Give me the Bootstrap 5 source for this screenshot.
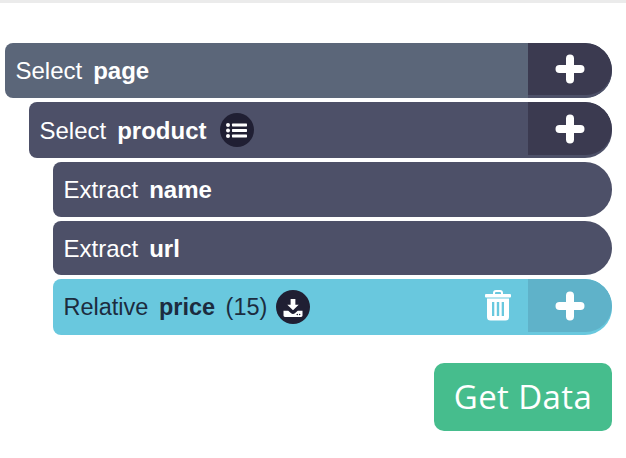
<!DOCTYPE html>
<html lang="en">
<head>
    <meta charset="UTF-8">
    <meta name="viewport" content="width=device-width, initial-scale=1.0">
    <title>Get Data</title>
    <link href="https://cdn.jsdelivr.net/npm/bootstrap@5.3.0/dist/css/bootstrap.min.css" rel="stylesheet">
    <style>
        body {
            background: #fff;
            border-top: 3px solid #ebebeb;
            padding: 40px 14px 0 5px;
            font-family: "Liberation Sans", Arial, sans-serif;
        }
        .cmd-list { gap: 4px; }
        .cmd-row {
            color: #fff;
            font-size: 24px;
            line-height: 1;
            border-radius: 8px 27px 27px 8px;
            overflow: hidden;
        }
        .cmd-page { background: #5b6679; height: 55px; }
        .cmd-product { background: #4d5068; height: 56px; margin-left: 24px; }
        .cmd-extract { background: #4d5068; height: 55px; margin-left: 48px; }
        .cmd-url { height: 54px; }
        .cmd-relative { background: #69c8de; color: #1c2c3f; height: 56px; margin-left: 48px; font-size: 23.5px; }
        .cmd-label { padding-left: 10.5px; gap: 11px; }
        .cmd-relative .cmd-label { gap: 10.5px; }
        .cmd-label > span:not(.round-ico), .cmd-label > b { padding-top: 1px; }
        .cmd-add {
            width: 84px;
            background: #3b3a50;
            border-radius: 0 27px 27px 0;
            margin-bottom: 3px;
        }
        .cmd-page .cmd-add { box-shadow: 0 3px 0 #4d5068; }
        .cmd-relative .cmd-add { background: #5fb2c9; }
        .round-ico {
            width: 34px;
            height: 34px;
            border-radius: 50%;
            background: #201f33;
        }
        .cmd-product .round-ico { margin-left: 2px; }
        .cmd-relative .round-ico { margin-left: -2px; }
        .trash-ico { margin-right: 16px; margin-bottom: 3px; }
        .get-data {
            width: 178px;
            height: 68px;
            margin-top: 28px;
            background: #46bd8d;
            border: 0;
            border-radius: 10px;
            color: #fff;
            font-family: "Open Sans", sans-serif;
            font-size: 33px;
            letter-spacing: .4px;
        }
        .get-data:hover { background: #46bd8d; color: #fff; }
    </style>
</head>
<body>
<div class="d-flex flex-column cmd-list">
    <div class="cmd-row cmd-page d-flex align-items-center">
        <div class="cmd-label d-flex align-items-center flex-grow-1"><span>Select</span><b>page</b></div>
        <div class="cmd-add align-self-stretch d-flex align-items-center justify-content-center">
            <svg width="30" height="30" viewBox="0 0 30 30"><path d="M15 4.500v21M4.500 15h21" stroke="#fff" stroke-width="8" stroke-linecap="round"/></svg>
        </div>
    </div>
    <div class="cmd-row cmd-product d-flex align-items-center">
        <div class="cmd-label d-flex align-items-center flex-grow-1"><span>Select</span><b>product</b>
            <span class="round-ico d-flex align-items-center justify-content-center">
                <svg width="21" height="15" viewBox="0 0 21 15" fill="#fff"><circle cx="2" cy="2" r="2"/><circle cx="2" cy="7.5" r="2"/><circle cx="2" cy="13" r="2"/><rect x="6" y="0.6" width="15" height="2.8" rx=".6"/><rect x="6" y="6.1" width="15" height="2.8" rx=".6"/><rect x="6" y="11.6" width="15" height="2.8" rx=".6"/></svg>
            </span>
        </div>
        <div class="cmd-add align-self-stretch d-flex align-items-center justify-content-center">
            <svg width="30" height="30" viewBox="0 0 30 30"><path d="M15 4.500v21M4.500 15h21" stroke="#fff" stroke-width="8" stroke-linecap="round"/></svg>
        </div>
    </div>
    <div class="cmd-row cmd-extract d-flex align-items-center">
        <div class="cmd-label d-flex align-items-center flex-grow-1"><span>Extract</span><b>name</b></div>
    </div>
    <div class="cmd-row cmd-extract cmd-url d-flex align-items-center">
        <div class="cmd-label d-flex align-items-center flex-grow-1"><span>Extract</span><b>url</b></div>
    </div>
    <div class="cmd-row cmd-relative d-flex align-items-center">
        <div class="cmd-label d-flex align-items-center flex-grow-1"><span>Relative</span><b>price</b><span>(15)</span>
            <span class="round-ico d-flex align-items-center justify-content-center">
                <svg width="20" height="19" viewBox="0 0 20 20" fill="#fff"><path d="M7.500 1h5v6h3.500L10 13 4 7h3.500z"/><path d="M0 13.500h5L8 16c1.100 1 2.900 1 4 0l3-2.500h5v5c0 .8-.7 1.500-1.500 1.500h-17C.7 20 0 19.300 0 18.500z"/><circle cx="14.500" cy="17.300" r=".8" fill="#201f33"/><circle cx="17" cy="17.300" r=".8" fill="#201f33"/></svg>
            </span>
        </div>
        <svg class="trash-ico" width="28" height="31" viewBox="0 0 26 31" fill="#fff"><path d="M9 4.500V3a2 2 0 0 1 2-2h4a2 2 0 0 1 2 2v1.500" fill="none" stroke="#fff" stroke-width="2"/><rect x="0" y="4" width="26" height="3.500" rx="1"/><path fill-rule="evenodd" d="M2 8.500h22V27a3.500 3.500 0 0 1-3.500 3.500h-15A3.500 3.500 0 0 1 2 27zM7 12v14h2.300V12zM11.800 12v14h2.400V12zM16.700 12v14H19V12z"/></svg>
        <div class="cmd-add align-self-stretch d-flex align-items-center justify-content-center">
            <svg width="30" height="30" viewBox="0 0 30 30"><path d="M15 4.500v21M4.500 15h21" stroke="#fff" stroke-width="8" stroke-linecap="round"/></svg>
        </div>
    </div>
</div>
<div class="d-flex justify-content-end">
    <button type="button" class="btn get-data p-0">Get Data</button>
</div>
<script src="https://cdn.jsdelivr.net/npm/bootstrap@5.3.0/dist/js/bootstrap.bundle.min.js"></script>
</body>
</html>
